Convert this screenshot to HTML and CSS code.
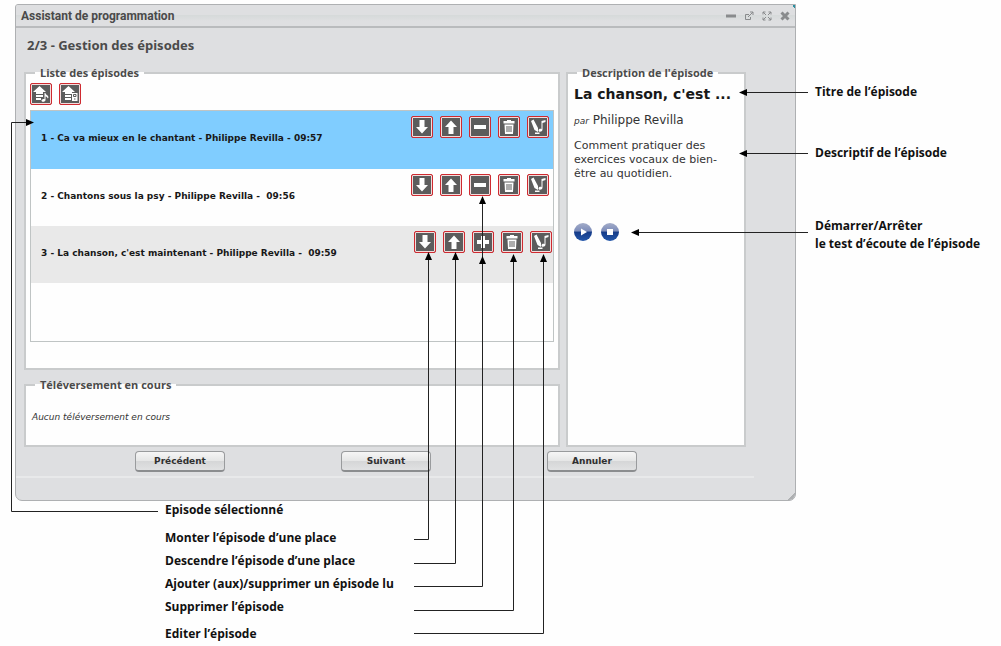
FILE: index.html
```html
<!DOCTYPE html>
<html lang="fr">
<head>
<meta charset="utf-8">
<title>Assistant de programmation</title>
<link rel="stylesheet" href="styles.css">
</head>
<body>
<svg class="sprite" aria-hidden="true">
  <symbol id="down" viewBox="0 0 18 18"><path d="M6.500 2h5v7H15l-6 6.500-6-6.500h3.500z"/></symbol>
  <symbol id="up" viewBox="0 0 18 18"><path d="M6.500 16h5V9H15L9 2.500 3 9h3.500z"/></symbol>
  <symbol id="minus" viewBox="0 0 18 18"><path d="M3 7h12v4H3z"/></symbol>
  <symbol id="plus" viewBox="0 0 18 18"><path d="M7 3h4v4h4v4h-4v4H7v-4H3V7h4z"/></symbol>
  <symbol id="trash" viewBox="0 0 18 18"><path d="M7 2h4v1h3.500v2.500h-11V3H7zM4.500 6.500h9L13 16H5z"/><path class="cut" d="M7 8v6M9 8v6M11 8v6"/></symbol>
  <symbol id="edit" viewBox="0 0 18 18"><path d="M2 3l2.500-1.500L9 10v4l-3.500-2zM12.500 3L16.500 2v2l-3 1v6.500c0 2.500-4 3-4 1 0-1.500 1.500-2 3-1.500zM6 14.500h4.500V16H6z"/></symbol>
  <symbol id="upload-music" viewBox="0 0 18 18"><path d="M7.500 1L14 7h-3v2H4V7H1zM4 10h7v2H4zM4 13h5v2H4zM12.500 8h1c0 2 3 2 3 4.500l-1 1c0-2-2-2-2-2V15c0 2-4 2.500-4 .5 0-1 1-1.500 3-1.500z"/></symbol>
  <symbol id="upload-device" viewBox="0 0 18 18"><path d="M7.500 1L14 7h-3v2H4V7H1zM4 10h6v2H4zM4 13h6v2H4zM11 8h5.500v8H11z"/><path class="cut" d="M12.500 9.500h2.500v2h-2.500zM13 14h1.500"/></symbol>
</svg>
<main class="guide">
  <section class="dialog" aria-label="Assistant de programmation">
    <header class="titlebar">
      <h1>Assistant de programmation</h1>
      <div class="window-tools">
        <button type="button" aria-label="Réduire"><svg viewBox="0 0 10 10"><path class="thick" d="M0 5h10"/></svg></button>
        <button type="button" aria-label="Détacher"><svg viewBox="0 0 10 10"><path d="M5 3.500H1.500v5h5V6M4 6l5-5M6 1h3v3"/></svg></button>
        <button type="button" aria-label="Agrandir"><svg viewBox="0 0 10 10"><path d="M1 3.500V1h2.500M6.500 1H9v2.500M9 6.500V9H6.500M3.500 9H1V6.500M1 1l3 3M9 1L6 4M9 9L6 6M1 9l3-3"/></svg></button>
        <button type="button" aria-label="Fermer"><svg viewBox="0 0 10 10"><path class="thick" d="M1.500 1.500l7 7M8.500 1.500l-7 7"/></svg></button>
      </div>
    </header>
    <h2>2/3 - Gestion des épisodes</h2>
    <div class="panels">
      <div class="left-panels">
        <fieldset class="episodes">
          <legend>Liste des épisodes</legend>
          <div class="tools">
            <button class="tool" type="button" aria-label="Téléverser un morceau"><svg><use href="#upload-music"/></svg></button>
            <button class="tool" type="button" aria-label="Téléverser depuis un appareil"><svg><use href="#upload-device"/></svg></button>
          </div>
          <ol class="list">
            <li class="row selected">
              <span>1 - Ca va mieux en le chantant - Philippe Revilla -&nbsp;09:57</span>
              <div class="actions">
                <button class="tool" type="button" aria-label="Descendre"><svg><use href="#down"/></svg></button>
                <button class="tool" type="button" aria-label="Monter"><svg><use href="#up"/></svg></button>
                <button class="tool" type="button" aria-label="Retirer"><svg><use href="#minus"/></svg></button>
                <button class="tool" type="button" aria-label="Supprimer"><svg><use href="#trash"/></svg></button>
                <button class="tool" type="button" aria-label="Editer"><svg><use href="#edit"/></svg></button>
              </div>
            </li>
            <li class="row">
              <span>2 - Chantons sous la psy - Philippe Revilla -&nbsp; 09:56</span>
              <div class="actions">
                <button class="tool" type="button" aria-label="Descendre"><svg><use href="#down"/></svg></button>
                <button class="tool" type="button" aria-label="Monter"><svg><use href="#up"/></svg></button>
                <button class="tool" type="button" aria-label="Retirer"><svg><use href="#minus"/></svg></button>
                <button class="tool" type="button" aria-label="Supprimer"><svg><use href="#trash"/></svg></button>
                <button class="tool" type="button" aria-label="Editer"><svg><use href="#edit"/></svg></button>
              </div>
            </li>
            <li class="row unread">
              <span>3 - La chanson, c'est maintenant - Philippe Revilla -&nbsp; 09:59</span>
              <div class="actions">
                <button class="tool" type="button" aria-label="Descendre"><svg><use href="#down"/></svg></button>
                <button class="tool" type="button" aria-label="Monter"><svg><use href="#up"/></svg></button>
                <button class="tool" type="button" aria-label="Ajouter"><svg><use href="#plus"/></svg></button>
                <button class="tool" type="button" aria-label="Supprimer"><svg><use href="#trash"/></svg></button>
                <button class="tool" type="button" aria-label="Editer"><svg><use href="#edit"/></svg></button>
              </div>
            </li>
          </ol>
        </fieldset>
        <fieldset class="uploads">
          <legend>Téléversement en cours</legend>
          <p>Aucun téléversement en cours</p>
        </fieldset>
      </div>
      <fieldset class="details">
        <legend>Description de l'épisode</legend>
        <h3>La chanson, c'est ...</h3>
        <p class="author"><em>par</em> Philippe Revilla</p>
        <p class="summary">Comment pratiquer des exercices vocaux de bien-être au quotidien.</p>
        <div class="player">
          <button type="button" aria-label="Démarrer"><svg viewBox="0 0 18 18"><path d="M7 5.500v7l6-3.500z"/></svg></button>
          <button type="button" aria-label="Arrêter"><svg viewBox="0 0 18 18"><path d="M6 6h6v6H6z"/></svg></button>
        </div>
      </fieldset>
    </div>
    <div class="nav">
      <button type="button">Précédent</button>
      <button type="button">Suivant</button>
      <button type="button">Annuler</button>
    </div>
    <div class="status"></div>
    <span class="corner"></span>
    <span class="resize"></span>
  </section>
  <ul class="notes side">
    <li>Titre de l’épisode</li>
    <li>Descriptif de l’épisode</li>
    <li>Démarrer/Arrêter<br>le test d’écoute de l’épisode</li>
  </ul>
  <ul class="notes below">
    <li>Episode sélectionné</li>
    <li>Monter l’épisode d’une place</li>
    <li>Descendre l’épisode d’une place</li>
    <li>Ajouter (aux)/supprimer un épisode lu</li>
    <li>Supprimer l’épisode</li>
    <li>Editer l’épisode</li>
  </ul>
  <svg class="connectors" width="1001" height="646" viewBox="0 0 1001 646" aria-hidden="true">
    <defs>
      <marker id="tip" markerUnits="userSpaceOnUse" markerWidth="8" markerHeight="8" refX="7" refY="4" orient="auto"><path d="M0 .5L8 4 0 7.500z"/></marker>
    </defs>
    <g marker-end="url(#tip)">
      <path d="M808 92.500H740"/>
      <path d="M808 153.500H740"/>
      <path d="M808 232.500H632"/>
      <path d="M158 511.500H11.500V122.500H33"/>
      <path d="M414 539.500H428.500V253"/>
      <path d="M414 563.500H455.500V253"/>
      <path d="M414 586.500H482.500V197"/>
      <path d="M482.500 275V257"/>
      <path d="M414 610.500H513.500V255"/>
      <path d="M414 633.500H543.500V255"/>
    </g>
  </svg>
</main>
</body>
</html>
```

FILE: styles.css
```css
* { box-sizing: border-box; }
body { margin: 0; background: #fefefe; color: #333; font-family: "DejaVu Sans", Verdana, sans-serif; }
h1, h2, h3, p, ul, ol { margin: 0; padding: 0; }
ul, ol { list-style: none; }
button { padding: 0; font: inherit; }
.sprite { display: none; }

.guide {
  position: relative;
  display: grid;
  grid-template-columns: minmax(0, 1fr) 186px;
  column-gap: 19px;
  padding: 4px 0 0 15px;
}

.dialog {
  position: relative;
  border: 1px solid #aeb0b2;
  border-radius: 3px 0 7px 7px;
  background: #dedfe1;
  overflow: hidden;
}
.titlebar {
  display: flex;
  justify-content: space-between;
  align-items: center;
  height: 23px;
  padding: 0 5px;
  border-bottom: 2px solid #b9bbbd;
  background: linear-gradient(#dedfe1 50%, #d6dada 50%, #dedfe1 75%);
}
h1 { font: bold 12px/20px Roboto, Arial, sans-serif; color: #4a4a4a; }
.window-tools { display: flex; gap: 8px; }
.window-tools button { display: flex; border: 0; background: none; }
.window-tools svg { width: 10px; height: 10px; fill: none; stroke: #898b8d; }
.window-tools .thick { stroke-width: 3; }
h2 { padding: 8px 11px 11px; font: bold 13px/18px "Noto Sans", sans-serif; color: #4b4b4b; }

.panels {
  display: grid;
  grid-template-columns: minmax(0, 1fr) 180px;
  gap: 6px;
  padding: 0 49px 0 8px;
}
.left-panels { display: flex; flex-direction: column; gap: 7px; }
fieldset {
  min-width: 0;
  margin: 0;
  padding: 0 4px;
  border: 2px solid #c9cbcc;
  background: #fefefe;
}
legend {
  margin-left: 5px;
  padding: 0 5px;
  font: bold 11px/16px "Open Sans", sans-serif;
  color: #4b4b4b;
}
.episodes { padding-bottom: 26px; }
.tools { display: flex; gap: 7px; padding: 2px 0 5px; }
.tool {
  display: flex;
  align-items: center;
  justify-content: center;
  width: 22px;
  height: 22px;
  border: 1px solid #cf2a30;
  border-radius: 2px;
  background: #5c5c5c;
  box-shadow: inset 0 0 0 1px #f4dcdc;
}
.tool svg { width: 18px; height: 18px; fill: #fefefe; }
.cut { fill: none; stroke: #5c5c5c; }
.list { min-height: 232px; border: 1px solid #bfc4c4; }
.row {
  display: flex;
  justify-content: space-between;
  height: 57px;
  padding: 5px 4px 0 10px;
  font: bold 9px/44px "DejaVu Sans", Verdana, sans-serif;
  color: #181818;
  white-space: nowrap;
}
.selected { height: 58px; background: #80cdff; }
.unread { padding-right: 1px; background: #e9e9e9; }
.actions { display: flex; gap: 7px; }
.uploads { padding-bottom: 20px; }
.uploads p { padding: 16px 2px 0; font: italic 9px/16px "DejaVu Sans", Verdana, sans-serif; }

.details { padding: 0 6px; }
.details legend { margin-left: 3px; }
h3 { padding-top: 1px; font: bold 14px/24px "DejaVu Sans", Verdana, sans-serif; color: #181818; white-space: nowrap; }
.author { padding-top: 5px; font-size: 12px; line-height: 18px; }
.author em { font-size: 9px; }
.summary { padding: 9px 10px 0 0; font-size: 11px; line-height: 14px; }
.player { display: flex; gap: 9px; padding-top: 42px; }
.player button {
  display: flex;
  width: 18px;
  height: 18px;
  border: 0;
  border-radius: 50%;
  background: linear-gradient(#a3acc8 0, #7c8cba 45%, #153b88 50%, #2457aa);
}
.player svg { width: 18px; height: 18px; fill: #fefefe; }

.nav { display: flex; justify-content: center; gap: 116px; padding: 4px 48px 4px 9px; }
.nav button {
  width: 90px;
  height: 21px;
  border: 1px solid #999b9d;
  border-bottom: 2px solid #8b8d8f;
  border-radius: 4px;
  background: linear-gradient(#f6f6f6, #e5e6e6 50%, #d5d6d7 50%, #e0e1e2);
  font: bold 9px/18px "DejaVu Sans", Verdana, sans-serif;
  color: #303030;
}
.status { height: 24px; margin-right: 41px; border-top: 2px solid #e8e9ea; }
.corner {
  position: absolute;
  right: 0;
  top: 0;
  width: 3px;
  height: 3px;
  background: linear-gradient(45deg, transparent 50%, #2b8fa0 50%);
}
.resize {
  position: absolute;
  right: 0;
  bottom: 0;
  width: 7px;
  height: 7px;
  background: linear-gradient(135deg, transparent 50%, #aeb0b2 50%);
}

.notes { font: bold 12px/18px "Open Sans", sans-serif; color: #111; white-space: nowrap; }
.side { display: flex; flex-direction: column; padding-top: 79px; }
.side li:nth-child(2) { margin: 43px 0 55px; }
.below { display: flex; flex-direction: column; gap: 5px; padding-left: 150px; }
.below li:first-child { margin-bottom: 5px; }
.below li:last-child { margin-top: 4px; }

.connectors { position: absolute; top: 0; left: 0; fill: none; stroke: #222; pointer-events: none; }
.connectors marker path { fill: #000; stroke: none; }
```
